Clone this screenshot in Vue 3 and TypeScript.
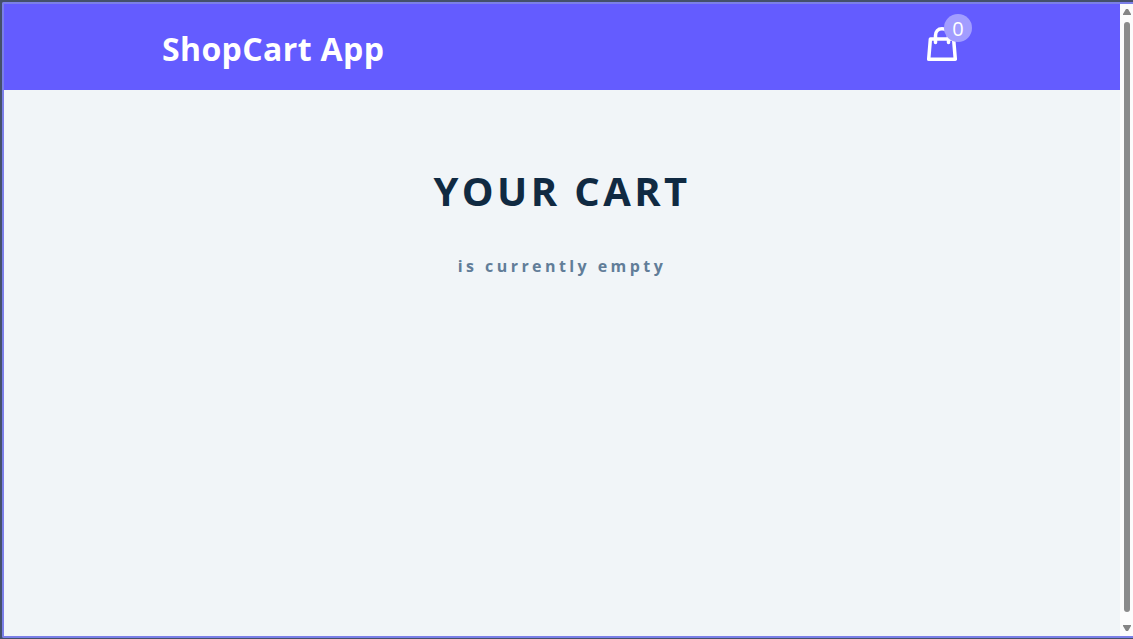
<script setup lang="ts">
import { ref } from 'vue'

const amount = ref<number>(0)
</script>

<template>
  <div class="window">
    <div class="page">
      <nav class="navbar">
        <div class="nav-center">
          <h3 class="brand">ShopCart App</h3>
          <div class="nav-container">
            <svg class="bag" viewBox="0 0 30 36" fill="none" stroke="#fff" stroke-width="3.5" stroke-linejoin="round" stroke-linecap="round">
              <path d="M3.4 11.9H26.6L28.3 32.2H1.7Z" />
              <path d="M8.5 15.6V8.6C8.5 4.4 11 1.8 15 1.8S21.5 4.4 21.5 8.6V15.6" />
            </svg>
            <div class="amount-container">
              <p class="total-amount">{{ amount }}</p>
            </div>
          </div>
        </div>
      </nav>
      <main class="cart">
        <header>
          <h2>your cart</h2>
          <h4 class="empty-cart">is currently empty</h4>
        </header>
      </main>
    </div>
    <div class="scrollbar">
      <svg class="arrow" viewBox="0 0 8 6"><path d="M0 6V5L3 0H5L8 5V6Z" /></svg>
      <div class="thumb"></div>
      <svg class="arrow" viewBox="0 0 8 6"><path d="M0 0V1L3 6H5L8 1V0Z" /></svg>
    </div>
  </div>
</template>

<style>
body {
  margin: 0;
  overflow: hidden;
  background: #44506b;
}
</style>

<style scoped>
.window {
  box-sizing: border-box;
  display: flex;
  height: 636px;
  margin: 2px 0 1px 2px;
  border: 2px solid #7b7fe8;
  border-right: 0;
  border-radius: 2px 0 0 2px;
  background: #fcfcfc;
  font-family: 'Segoe UI', 'Open Sans', 'Noto Sans', sans-serif;
}
.page {
  width: 1116px;
  background: #f1f5f8;
}
.navbar {
  display: flex;
  justify-content: center;
  height: 86px;
  background: #645cff;
}
.nav-center {
  display: flex;
  align-items: center;
  justify-content: space-between;
  width: 800px;
}
h2,
h3,
h4,
p {
  margin: 0;
}
.brand {
  padding-top: 3px;
  color: #fff;
  font-size: 32px;
  line-height: 39px;
  letter-spacing: 0.38px;
}
.nav-container {
  position: relative;
  width: 30px;
  height: 36px;
  margin: -4px 5px 0 0;
}
.bag {
  display: block;
  width: 30px;
  height: 36px;
}
.amount-container {
  position: absolute;
  top: -13px;
  right: -15px;
  display: flex;
  align-items: center;
  justify-content: center;
  width: 28px;
  height: 28px;
  border-radius: 50%;
  background: #a29dff;
}
.total-amount {
  padding-top: 2px;
  color: #fff;
  font-size: 20px;
  line-height: 28px;
}
.cart {
  padding-top: 76px;
  text-align: center;
}
h2 {
  color: #102a42;
  font-size: 40px;
  line-height: 50px;
  letter-spacing: 3.4px;
  text-transform: uppercase;
}
.empty-cart {
  margin-top: 38px;
  color: #617d98;
  font-size: 16px;
  line-height: 24px;
  letter-spacing: 3.43px;
}
.scrollbar {
  box-sizing: border-box;
  display: flex;
  flex: 1;
  flex-direction: column;
  align-items: center;
  justify-content: space-between;
  padding: 5px 0;
}
.thumb {
  flex: 1;
  width: 6px;
  margin: 7px 0 13px;
  border-radius: 3px;
  background: #8b8b8b;
}
.arrow {
  width: 8px;
  height: 6px;
  fill: #858585;
}
</style>
